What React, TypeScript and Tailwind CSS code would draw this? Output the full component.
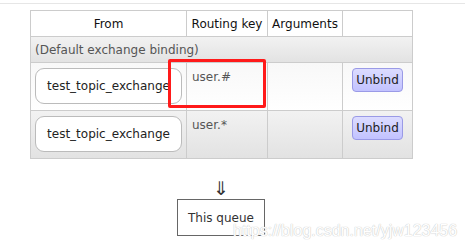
import React from "react";

const font = { fontFamily: '"DejaVu Sans", Verdana, sans-serif' };

function ExchangeBox() {
  return (
    <div className="w-[147px] h-[36px] rounded-[9px] border border-[#bbbbbb] bg-white flex items-center justify-center text-[12px] text-[#222]">
      test_topic_exchange
    </div>
  );
}

function UnbindButton() {
  return (
    <button className="w-[51px] h-[24px] rounded-[4px] border border-[#9a9ae6] bg-gradient-to-b from-[#dcdcff] to-[#c2c2ff] text-[12px] text-[#222] leading-none">
      Unbind
    </button>
  );
}

export default function App() {
  return (
    <div className="relative w-[465px] h-[250px] bg-white overflow-hidden" style={font}>
      <div className="h-[4px] border-b border-[#e6e6e6]" />
      <div className="ml-[30px] mt-[6px] w-[382px]">
        <table className="table-fixed border-collapse w-[382px] text-[12px]">
          <colgroup>
            <col className="w-[156px]" />
            <col className="w-[81px]" />
            <col className="w-[75px]" />
            <col className="w-[70px]" />
          </colgroup>
          <thead>
            <tr className="h-[26px] bg-white">
              <th className="border border-[#cccccc] font-normal text-[#111] p-0 text-center">From</th>
              <th className="border border-[#cccccc] font-normal text-[#111] p-0 text-center">Routing key</th>
              <th className="border border-[#cccccc] font-normal text-[#111] p-0 text-center">Arguments</th>
              <th className="border border-[#cccccc] font-normal p-0" />
            </tr>
          </thead>
          <tbody>
            <tr className="h-[26px] bg-gradient-to-b from-[#f2f2f2] to-[#e2e2e2]">
              <td colSpan={4} className="border border-[#cccccc] px-[4px] py-0 text-[#555]">
                (Default exchange binding)
              </td>
            </tr>
            <tr className="h-[48px] bg-gradient-to-b from-[#f8f8f8] to-[#ffffff]">
              <td className="border border-[#cccccc] align-top pt-[5px] pl-[4px] pr-0">
                <ExchangeBox />
              </td>
              <td className="border border-[#cccccc] align-top pt-[5px] pl-[5px] text-[#555]">user.#</td>
              <td className="border border-[#cccccc]" />
              <td className="border border-[#cccccc] align-top pt-[5px] text-center">
                <UnbindButton />
              </td>
            </tr>
            <tr className="h-[48px] bg-gradient-to-b from-[#f2f2f2] to-[#e2e2e2]">
              <td className="border border-[#cccccc] align-top pt-[5px] pl-[4px] pr-0">
                <ExchangeBox />
              </td>
              <td className="border border-[#cccccc] align-top pt-[5px] pl-[5px] text-[#555]">user.*</td>
              <td className="border border-[#cccccc]" />
              <td className="border border-[#cccccc] align-top pt-[5px] text-center">
                <UnbindButton />
              </td>
            </tr>
          </tbody>
        </table>
        <div className="flex flex-col items-center mt-[19px]">
          <div className="text-[19px] leading-[20px] text-[#333]">⇓</div>
          <div className="mt-[1px] w-[88px] h-[37px] border border-[#666666] flex items-center justify-center text-[12px] text-[#333]">
            This queue
          </div>
        </div>
      </div>
      <div className="absolute left-[168px] top-[59px] w-[98px] h-[49px] border-[3px] border-[#ff1a1a] rounded-[2px]" />
      <div
        className="absolute left-[233px] top-[222px] text-[16px] leading-[18px] text-white"
        style={{ fontFamily: '"Liberation Sans", Arial, sans-serif', textShadow: "0 0 1px #c8c8c8, 0 0 1px #c8c8c8" }}
      >
        https://blog.csdn.net/yjw123456
      </div>
    </div>
  );
}
